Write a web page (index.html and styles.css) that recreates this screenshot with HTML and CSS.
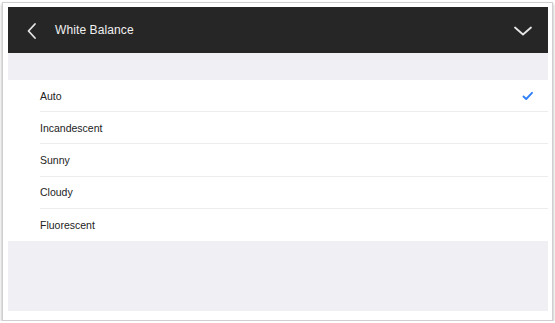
FILE: index.html
```html
<!DOCTYPE html>
<html>

<head>
    <meta charset="UTF-8">
    <title>White Balance</title>
    <link rel="stylesheet" href="styles.css">
</head>

<body>
    <div class="frame">
        <div class="screen">
            <div class="topbar">
                <div class="topbar-left">
                    <svg class="back" width="12" height="18" viewBox="0 0 12 18">
                        <path d="M9 2 L2.5 9 L9 16" fill="none" stroke="#e6e6e6" stroke-width="1.8" stroke-linecap="round" stroke-linejoin="round"/>
                    </svg>
                    <span class="title">White Balance</span>
                </div>
                <svg class="collapse" width="20" height="12" viewBox="0 0 20 12">
                    <path d="M2 2.5 L10 9.5 L18 2.5" fill="none" stroke="#e6e6e6" stroke-width="1.8" stroke-linecap="round" stroke-linejoin="round"/>
                </svg>
            </div>
            <div class="spacer"></div>
            <div class="list">
                <div class="item">
                    <span>Auto</span>
                    <svg class="check" width="12" height="10" viewBox="0 0 12 10">
                        <path d="M1.5 5.5 L4.2 8 L10 1.8" fill="none" stroke="#2f80f7" stroke-width="1.9" stroke-linecap="round" stroke-linejoin="round"/>
                    </svg>
                </div>
                <div class="item"><span>Incandescent</span></div>
                <div class="item"><span>Sunny</span></div>
                <div class="item"><span>Cloudy</span></div>
                <div class="item last"><span>Fluorescent</span></div>
            </div>
            <div class="filler"></div>
        </div>
    </div>
</body>
</html>
```

FILE: styles.css
```css
* {
    box-sizing: border-box;
}
body {
    margin: 0;
    background: white;
    font-family: 'Liberation Sans', Arial, sans-serif;
}
.frame {
    width: 551px;
    height: 319px;
    margin: 2px 0 0 2px;
    padding: 4px 4px 9px 5px;
    border: 1px solid #cfcfcf;
    background: white;
    box-shadow: 0px 2px 3px rgba(0, 0, 0, 0.35);
}
.screen {
    height: 100%;
    display: flex;
    flex-direction: column;
    background: #efeff4;
}
.topbar {
    height: 46px;
    flex-shrink: 0;
    display: flex;
    align-items: center;
    justify-content: space-between;
    padding: 0 15px 0 18px;
    background: #262626;
}
.topbar-left {
    display: flex;
    align-items: center;
}
.back {
    display: block;
    margin-top: 1px;
}
.title {
    margin-left: 17px;
    color: #f0f0f0;
    font-size: 12px;
    letter-spacing: 0.1px;
}
.collapse {
    display: block;
    margin-top: 1px;
}
.spacer {
    height: 27px;
    flex-shrink: 0;
}
.list {
    background: white;
    flex-shrink: 0;
}
.item {
    height: 32.2px;
    margin-left: 32px;
    padding-right: 14px;
    display: flex;
    align-items: center;
    justify-content: space-between;
    border-bottom: 1px solid #ececec;
    color: #222;
    font-size: 10.5px;
}
.item.last {
    border-bottom: 0;
}
.check {
    display: block;
}
.filler {
    flex: 1;
}
```
